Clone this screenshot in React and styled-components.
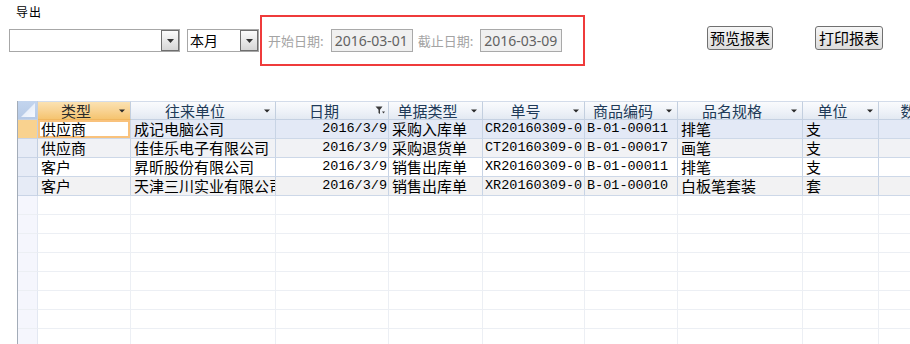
import React from 'react';
import styled, { createGlobalStyle, css } from 'styled-components';

const Global = createGlobalStyle`
  html, body { margin: 0; padding: 0; background: #fff; overflow: hidden; }
  body { font-family: "Noto Sans CJK SC", "Noto Sans", sans-serif; }
`;

const Page = styled.div`
  width: 910px;
  height: 344px;
  overflow: hidden;
`;

const Title = styled.div`
  box-sizing: border-box;
  height: 15px;
  padding: 4px 0 0 16px;
  line-height: 15px;
  font-size: 12px;
  letter-spacing: 1px;
  color: #000;
`;

const Toolbar = styled.div`
  display: flex;
  align-items: center;
  height: 51px;
  padding-left: 9px;
`;

const Select = styled.div`
  box-sizing: border-box;
  width: ${p => p.$w}px;
  height: 23px;
  margin-left: ${p => p.$ml || 0}px;
  border: 1px solid #a7a7a7;
  background: #fff;
  display: flex;
  align-items: stretch;
`;

const SelectText = styled.div`
  flex: 1;
  padding-left: 2px;
  font-size: 14px;
  line-height: 21px;
  color: #000;
`;

const SelectButton = styled.div`
  box-sizing: border-box;
  width: 18px;
  border: 1px solid #6e6e6e;
  background: linear-gradient(#fbfbfb, #d6d6d6);
  display: flex;
  align-items: center;
  justify-content: center;
`;

const RedBox = styled.div`
  box-sizing: border-box;
  width: 325px;
  height: 51px;
  margin-left: 1px;
  border: 2px solid #ef3b3b;
  display: flex;
  align-items: center;
  padding-left: 6px;
`;

const Label = styled.span`
  font-size: 13px;
  color: #a4a4a4;
  margin-right: 7px;
  white-space: nowrap;
`;

const DateBox = styled.div`
  box-sizing: border-box;
  width: 82px;
  height: 23px;
  margin-right: ${p => p.$mr || 0}px;
  border: 1px solid #a9a9a9;
  background: #f0f0f0;
  color: #626262;
  font-family: "Noto Sans", sans-serif;
  font-size: 14px;
  line-height: 21px;
  padding-left: 3px;
`;

const Buttons = styled.div`
  align-self: flex-start;
  margin-top: 11px;
  margin-left: 122px;
  display: flex;
  gap: 42px;
`;

const Button = styled.button`
  box-sizing: border-box;
  height: 24px;
  width: ${p => p.$w}px;
  padding: 0;
  border: 1px solid #707070;
  border-radius: 3px;
  background: linear-gradient(#f6f6f6, #dcdcdc);
  font-family: "Noto Sans CJK SC", sans-serif;
  font-size: 15px;
  line-height: 22px;
  color: #000;
`;

const cols = '20px 93px 145px 113px 94px 102px 93px 125px 76px 90px';

const Grid = styled.div`
  margin-top: 35px;
  margin-left: 17px;
  border-left: 1px solid #a3acb8;
  width: 960px;
`;

const HeaderRow = styled.div`
  display: grid;
  grid-template-columns: ${cols};
  height: 19px;
`;

const HeaderCell = styled.div`
  box-sizing: border-box;
  height: 19px;
  border-top: 1px solid #d3dcea;
  border-right: 1px solid #c3cfdf;
  border-bottom: 1px solid #c5d1e2;
  background: linear-gradient(#fafbfd 0%, #eef2f8 55%, #e3e9f2 100%);
  display: flex;
  align-items: center;
  color: #203a58;
  font-size: 15px;
  line-height: 17px;
  ${p => p.$active && css`
    background: linear-gradient(#fbe2b2 0%, #f8d393 50%, #f5c470 100%);
    border-bottom-color: #f0b760;
    color: #2a2a2a;
  `}
`;

const CornerCell = styled.div`
  box-sizing: border-box;
  height: 19px;
  border-right: 1px solid #c3cfdf;
  border-bottom: 1px solid #c5d1e2;
  background: linear-gradient(#c3d5ee, #b5c9e6);
  display: flex;
  align-items: flex-end;
  justify-content: flex-end;
`;

const HeaderText = styled.span`
  flex: 1;
  text-align: center;
  white-space: nowrap;
`;

const HeaderIcon = styled.span`
  width: 16px;
  display: flex;
  justify-content: center;
  align-items: center;
`;

const Row = styled.div`
  display: grid;
  grid-template-columns: ${cols};
  height: 19px;
  background: ${p => p.$bg};
`;

const Cell = styled.div`
  box-sizing: border-box;
  height: 19px;
  border-right: 1px solid ${p => (p.$empty ? '#eceff4' : '#c8d4e5')};
  border-bottom: 1px solid ${p => (p.$empty ? '#eceff4' : '#cdd8e8')};
  padding: 0 2px 0 3px;
  overflow-x: clip;
  overflow-y: visible;
  white-space: nowrap;
  font-size: 15px;
  line-height: 18px;
  color: #000;
  text-align: ${p => p.$align || 'left'};
  ${p => p.$mono && css`
    font-family: "Liberation Mono", monospace;
    font-size: 13.5px;
    padding: 0 1px 0 2px;
  `}
  ${p => p.$active && css`
    background: #fff;
    box-shadow: inset 0 0 0 2px #f9c27c;
  `}
`;

const Selector = styled.div`
  box-sizing: border-box;
  height: 19px;
  border-right: 1px solid ${p => (p.$empty ? '#e3e8f2' : '#c3cfe1')};
  border-bottom: 1px solid ${p => (p.$empty ? '#eceff4' : '#c9d4e6')};
  background: ${p => (p.$current ? '#f9d28f' : p.$empty ? '#f5f6fd' : '#e6ebf6')};
`;

const Arrow = () => (
  <svg width="7" height="4" viewBox="0 0 7 4">
    <path d="M0 0H7L3.5 4Z" fill="#333" />
  </svg>
);

const SmallArrow = () => (
  <svg width="6" height="4" viewBox="0 0 6 4">
    <path d="M0 0.5H6L3 3.5Z" fill="#2a2a2a" />
  </svg>
);

const Funnel = () => (
  <svg width="10" height="9" viewBox="0 0 10 9">
    <path d="M0.5 0.5H7.5L5 3.8V8L3.5 7V3.8Z" fill="#3a3a3a" />
    <path d="M7 5.5H10L8.5 7.5Z" fill="#3a3a3a" />
  </svg>
);

const Corner = () => (
  <svg width="14" height="14" viewBox="0 0 14 14" style={{ marginRight: 2, marginBottom: 2 }}>
    <defs>
      <linearGradient id="cg" x1="0" y1="0" x2="1" y2="1">
        <stop offset="0" stopColor="#dbe6f6" />
        <stop offset="1" stopColor="#f6f9fe" />
      </linearGradient>
    </defs>
    <path d="M14 0V14H0Z" fill="url(#cg)" />
  </svg>
);

const columns = [
  { title: '类型', icon: 'arrow', active: true },
  { title: '往来单位', icon: 'arrow' },
  { title: '日期', icon: 'filter', align: 'right', mono: true },
  { title: '单据类型', icon: 'arrow' },
  { title: '单号', icon: 'arrow', mono: true },
  { title: '商品编码', icon: 'arrow', mono: true },
  { title: '品名规格', icon: 'arrow' },
  { title: '单位', icon: 'arrow' },
  { title: '数量', icon: 'arrow' },
];

const rows = [
  ['供应商', '成记电脑公司', '2016/3/9', '采购入库单', 'CR20160309-0', 'B-01-00011', '排笔', '支', ''],
  ['供应商', '佳佳乐电子有限公司', '2016/3/9', '采购退货单', 'CT20160309-0', 'B-01-00017', '画笔', '支', ''],
  ['客户', '昇昕股份有限公司', '2016/3/9', '销售出库单', 'XR20160309-0', 'B-01-00011', '排笔', '支', ''],
  ['客户', '天津三川实业有限公司', '2016/3/9', '销售出库单', 'XR20160309-0', 'B-01-00010', '白板笔套装', '套', ''],
];

const rowBg = ['#e3e9f6', '#f1f2f5', '#ffffff', '#f2f2f3'];

export default function App() {
  return (
    <Page>
      <Global />
      <Title>导出</Title>
      <Toolbar>
        <Select $w={171}>
          <SelectText />
          <SelectButton><Arrow /></SelectButton>
        </Select>
        <Select $w={72} $ml={7}>
          <SelectText>本月</SelectText>
          <SelectButton><Arrow /></SelectButton>
        </Select>
        <RedBox>
          <Label>开始日期:</Label>
          <DateBox $mr={5}>2016-03-01</DateBox>
          <Label>截止日期:</Label>
          <DateBox>2016-03-09</DateBox>
        </RedBox>
        <Buttons>
          <Button $w={66}>预览报表</Button>
          <Button $w={68}>打印报表</Button>
        </Buttons>
      </Toolbar>
      <Grid>
        <HeaderRow>
          <CornerCell><Corner /></CornerCell>
          {columns.map(c => (
            <HeaderCell key={c.title} $active={c.active}>
              <HeaderText>{c.title}</HeaderText>
              <HeaderIcon>{c.icon === 'filter' ? <Funnel /> : <SmallArrow />}</HeaderIcon>
            </HeaderCell>
          ))}
        </HeaderRow>
        {rows.map((r, i) => (
          <Row key={i} $bg={rowBg[i]}>
            <Selector $current={i === 0} />
            {r.map((v, j) => (
              <Cell
                key={j}
                $align={columns[j].align}
                $mono={columns[j].mono}
                $active={i === 0 && j === 0}
              >
                {v}
              </Cell>
            ))}
          </Row>
        ))}
        {Array.from({ length: 8 }).map((_, i) => (
          <Row key={'e' + i} $bg="#fff">
            <Selector $empty />
            {columns.map((c, j) => (
              <Cell key={j} $empty />
            ))}
          </Row>
        ))}
      </Grid>
    </Page>
  );
}
